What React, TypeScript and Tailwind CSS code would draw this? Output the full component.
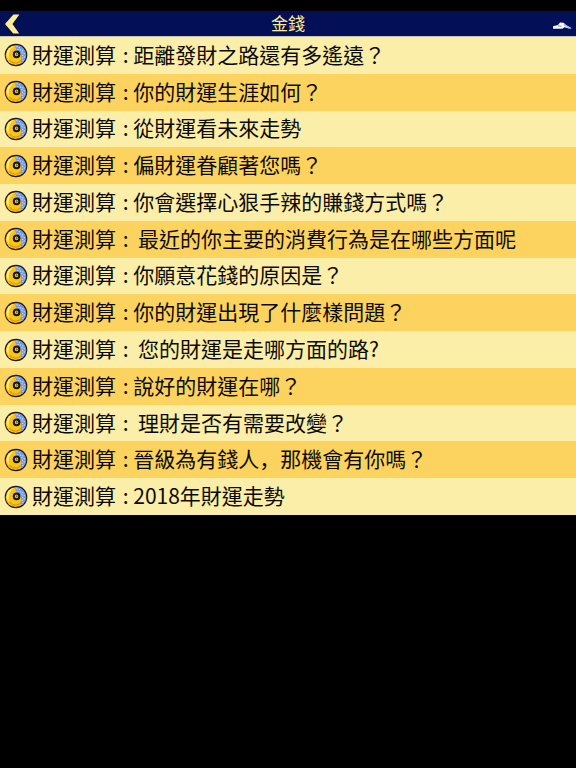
import React from 'react';

type Item = { gap: string; title: React.ReactNode };

const ITEMS: Item[] = [
  { gap: ' : ', title: '距離發財之路還有多遙遠？' },
  { gap: ' : ', title: '你的財運生涯如何？' },
  { gap: ' : ', title: '從財運看未來走勢' },
  { gap: ' : ', title: '偏財運眷顧著您嗎？' },
  { gap: ' : ', title: '你會選擇心狠手辣的賺錢方式嗎？' },
  { gap: ' :  ', title: '最近的你主要的消費行為是在哪些方面呢' },
  { gap: ' : ', title: '你願意花錢的原因是？' },
  { gap: ' : ', title: '你的財運出現了什麼樣問題？' },
  { gap: ' :  ', title: '您的財運是走哪方面的路?' },
  { gap: ' : ', title: '說好的財運在哪？' },
  { gap: ' :  ', title: '理財是否有需要改變？' },
  {
    gap: ' : ',
    title: (
      <>
        晉級為有錢人<span lang="zh-Hans" className="font-['Noto_Sans_CJK_SC',sans-serif]">，</span>那機會有你嗎？
      </>
    ),
  },
  { gap: ' : ', title: '2018年財運走勢' },
];

const CoinIcon: React.FC = () => (
  <svg viewBox="0 0 24 24" className="size-6 shrink-0" aria-hidden="true">
    <circle cx="12" cy="12" r="11.3" fill="#1a170f" />
    <circle cx="11.6" cy="12.2" r="9.9" fill="#f9c414" />
    <path d="M11.4 1.9A10.2 10.2 0 0 1 19 19.4C17.4 20.2 16.2 19 16.6 17C17.2 14.8 17.4 12.6 16.4 10.4C15.2 8 10.8 7.4 11.4 1.9Z" fill="#7397e6" />
    <g fill="#cfdcfc">
      <circle cx="13" cy="3.8" r=".7" />
      <circle cx="15.4" cy="4.6" r=".7" />
      <circle cx="14" cy="6.4" r=".7" />
      <circle cx="16.6" cy="7" r=".7" />
      <circle cx="18.8" cy="7.8" r=".7" />
      <circle cx="18" cy="9.8" r=".7" />
      <circle cx="20.2" cy="10.6" r=".7" />
      <circle cx="18.6" cy="12.4" r=".7" />
      <circle cx="20.2" cy="14" r=".7" />
      <circle cx="18.2" cy="15.2" r=".7" />
      <circle cx="19" cy="17.4" r=".7" />
    </g>
    <path d="M2.8 10C3.6 6.4 6.6 3.6 10 3C7.4 5 5.6 7.2 5 10C4.6 12.4 4.4 14.4 5 16.8C3.2 14.8 2.4 12.4 2.8 10Z" fill="#fdeb9a" />
    <path d="M5.6 17.4C8.6 21 13.6 21 16.6 18" fill="none" stroke="#e09a08" strokeWidth="1.3" />
    <circle cx="12.6" cy="11.4" r="2.8" fill="#e6c75a" stroke="#16140f" strokeWidth="2" />
    <path d="M12 10.6l1.2-.2 .4 1.2-1 .8z" fill="#3a3a30" />
  </svg>
);

const App: React.FC = () => {
  return (
    <div className="min-h-screen bg-black pt-[11px] font-['Noto_Sans_CJK_TC',sans-serif]" lang="zh-Hant">
      <header className="grid h-[25px] grid-cols-[1fr_auto_1fr] items-center bg-[#030f57]">
        <button type="button" aria-label="返回" className="justify-self-start pl-1">
          <svg viewBox="0 0 16 22" className="h-[22px] w-4" aria-hidden="true">
            <path d="M9.4 1.4H15.4L8.4 11L15.2 20.6H9.2L1 11Z" fill="#fdee8e" />
          </svg>
        </button>
        <h1 className="pb-0.5 text-[17px] leading-6 text-[#fbee8e]">金錢</h1>
        <button type="button" aria-label="分享" className="justify-self-end pt-1 pr-1">
          <svg viewBox="0 0 20 8" className="h-2 w-5" aria-hidden="true">
            <path d="M1 4.2L6 3L8 .6L11.6 .8L14 3L19.6 6.2L17 6.6L12.4 5.2L10.4 6.8H1Z" fill="#f6f8ff" />
            <path d="M11.6 1.2L14 3L19.6 6.2L17 6.4L12 3.6Z" fill="#a4bbea" />
            <path d="M6 3.8L9.4 4.4" stroke="#5a75b8" strokeWidth=".8" />
          </svg>
        </button>
      </header>

      <ul className="grid h-[479px] auto-rows-fr border-t border-[#c9c4b0]">
        {ITEMS.map((item, i) => (
          <li key={i} className="odd:bg-[#fbeea9] even:bg-[#fcd35f]">
            <a href="#" className="flex h-full items-center gap-1 pl-1 text-[21px] leading-8 text-[#0c0a04]">
              <CoinIcon />
              <span className="pb-[3px] whitespace-pre">
                <span className="mr-0.5">財運測算</span>
                {item.gap}
                {item.title}
              </span>
            </a>
          </li>
        ))}
      </ul>
    </div>
  );
};

export default App;
